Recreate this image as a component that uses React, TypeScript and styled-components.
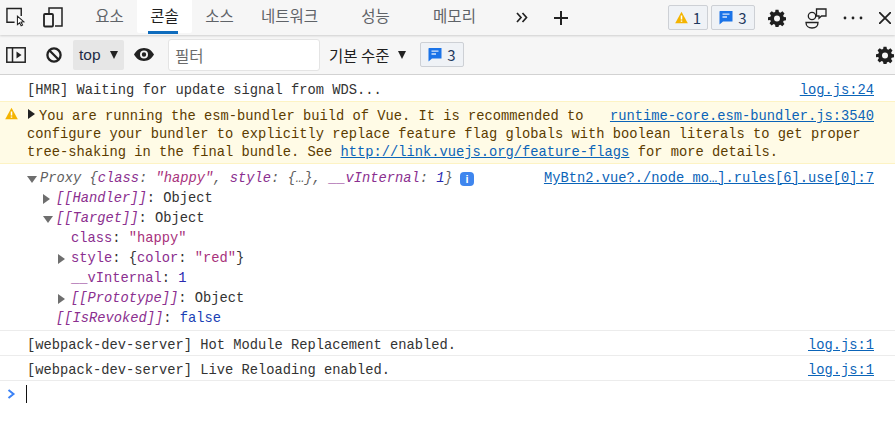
import React from "react";
import styled, { createGlobalStyle } from "styled-components";

const Global = createGlobalStyle`
  html, body { margin: 0; padding: 0; background: #fff; overflow: hidden; }
  body { font-family: "Noto Sans CJK KR", "Noto Sans", sans-serif; }
`;
const CJK = `"Noto Sans CJK KR", "Noto Sans", sans-serif`;
const MONO = `"Liberation Mono", monospace`;

const Page = styled.div`width: 895px; height: 421px; background: #fff; overflow: hidden;`;

const TopBar = styled.div`
  height: 35px; background: #f6f6f6; display: flex; align-items: center;
  box-shadow: 0 1px 2px rgba(0,0,0,.16); position: relative; z-index: 1;
`;
const IconSlot = styled.div<{ $w: number; $ml?: number; $mr?: number }>`
  width: ${p => p.$w}px; margin-left: ${p => p.$ml ?? 0}px; margin-right: ${p => p.$mr ?? 0}px; height: 100%; flex: none;
  display: flex; align-items: center; justify-content: center; color: #1f1f1f;
`;
const Tab = styled.div<{ $w: number; $ml?: number; $active?: boolean }>`
  width: ${p => p.$w}px; margin-left: ${p => p.$ml ?? 0}px; height: 33px; flex: none; display: flex; align-items: center; justify-content: center;
  box-sizing: border-box; padding-bottom: 3px;
  font: 15.5px ${CJK}; color: ${p => (p.$active ? "#1f1f1f" : "#5f6368")};
  background: ${p => (p.$active ? "#fff" : "transparent")};
  border-radius: 0 0 2px 2px; margin-top: -2px; position: relative;
  ${p => p.$active ? `&::after { content: ""; position: absolute; left: 11px; right: 14px; bottom: -1px; height: 3px; background: #0f6cbd; }` : ""}
`;
const Badge = styled.div<{ $w: number; $ml: number }>`
  width: ${p => p.$w}px; height: 25px; margin-left: ${p => p.$ml}px; flex: none; box-sizing: border-box;
  border: 1px solid #cdd0d5; border-radius: 2px; background: #eff2f6;
  display: flex; align-items: center; justify-content: center; gap: 5px;
  font: 15px ${CJK}; color: #1f3a5f;
`;
const FilterBar = styled.div`
  height: 39px; background: #f6f6f6; border-bottom: 1px solid #d2d2d2;
  display: flex; align-items: center; box-sizing: content-box;
`;
const ContextSelect = styled.div`
  width: 51px; height: 30px; margin-left: 11px; flex: none; background: #e6e6e6; border-radius: 2px;
  display: flex; align-items: center; padding-left: 6px; box-sizing: border-box; gap: 9px;
  font: 15.5px "Liberation Sans", sans-serif; color: #1e2b45;
`;
const Caret = styled.span`
  width: 0; height: 0; border-left: 4.5px solid transparent; border-right: 4.5px solid transparent;
  border-top: 8px solid #222; display: block;
`;
const FilterInput = styled.div`
  width: 152px; height: 32px; margin-left: 14px; flex: none; box-sizing: border-box; background: #fff;
  border: 1px solid #e4e4e4; border-radius: 3px; padding-left: 6px; display: flex; align-items: center;
  font: 15.5px ${CJK}; color: #6b6b6b;
`;
const Level = styled.div`
  margin-left: 9px; width: 81px; flex: none; display: flex; align-items: center; gap: 8px;
  font: 15.5px ${CJK}; color: #1f1f1f;
`;
const Spacer = styled.div`flex: 1;`;

const Log = styled.div`font: 13.75px/18px ${MONO}; color: #333;`;
const Row = styled.div<{ $h: number; $border?: boolean }>`
  height: ${p => p.$h}px; box-sizing: border-box; padding: 6px 21px 0 27px;
  display: flex; align-items: center; justify-content: space-between; white-space: pre;
  ${p => p.$border ? "border-bottom: 1px solid #ececec;" : ""}
`;
const Source = styled.a`color: #0b64b8; text-decoration: underline; white-space: pre;`;
const Warn = styled.div`
  height: 63px; box-sizing: border-box; background: #fffbe6; border-top: 1px solid #fdf3c4; border-bottom: 1px solid #fdf3c4;
  padding: 6px 21px 0 27px; color: #5c3c00; white-space: pre; position: relative;
`;
const FloatSource = styled(Source)`float: right;`;
const WarnIcon = styled.span`position: absolute; left: 5px; top: 5px; display: flex;`;
const WarnText = styled.span`margin-left: 12px;`;
const TreeBlock = styled.div`
  height: 167px; box-sizing: border-box; padding: 5px 21px 0 27px; border-bottom: 1px solid #ececec; position: relative;
`;
const TreeLine = styled.div<{ $indent: number }>`
  height: 20px; line-height: 20px; padding-left: ${p => p.$indent}px; white-space: pre; position: relative;
`;
const Arrow = styled.span<{ $open?: boolean }>`
  position: absolute; margin-left: -13px; top: ${p => (p.$open ? 7 : 5)}px; width: 0; height: 0; display: block;
  ${p => p.$open
    ? `border-left: 5.5px solid transparent; border-right: 5.5px solid transparent; border-top: 7px solid #6e6e6e;`
    : `border-top: 5.5px solid transparent; border-bottom: 5.5px solid transparent; border-left: 7px solid #6e6e6e;`}
`;
const WarnArrow = styled.span`
  position: absolute; left: 28px; top: 7px; width: 0; height: 0; display: block;
  border-top: 5.5px solid transparent; border-bottom: 5.5px solid transparent; border-left: 7px solid #222;
`;
const Key = styled.span`color: #8b2f8f;`;
const IKey = styled(Key)`font-style: italic;`;
const Str = styled.span`color: #a8327c;`;
const Num = styled.span<{ $i?: boolean }>`color: #2a2ab0; ${p => p.$i ? "font-style: italic;" : ""}`;
const Bool = styled.span`color: #1a3fb5;`;
const Gray = styled.span`color: #5f5f5f; font-style: italic;`;
const TreeSource = styled(Source)`position: absolute; right: 21px; top: 5px; line-height: 20px;`;
const InfoDot = styled.span`
  position: absolute; left: 460px; top: 8px; width: 14px; height: 14px; border-radius: 4px; background: #3f86ee;
  color: #fff; font: bold 11px/14px "Liberation Sans", sans-serif; text-align: center;
`;
const PromptRow = styled.div`height: 25px; display: flex; align-items: center; position: relative; padding-left: 7px; gap: 10px;`;
const Cursor = styled.span`width: 1px; height: 18px; background: #111; display: block; margin-top: 1px;`;

const Gear = ({ s = 18 }: { s?: number }) => (
  <svg width={s} height={s} viewBox="0 0 24 24" fill="#1f1f1f">
    <path fillRule="evenodd" d="M10 1h4l.6 3.1 1.9.8 2.7-1.8 2.8 2.8-1.8 2.7.8 1.9L24 11v4l-3.1.5-.8 1.9 1.8 2.7-2.8 2.8-2.7-1.8-1.9.8L14 24h-4l-.6-3.1-1.9-.8-2.7 1.8-2.8-2.8 1.8-2.7-.8-1.9L0 15v-4l3.1-.6.8-1.9L2.100 5.800l2.800-2.800 2.700 1.800 1.900-.8zM12 8.500a4 4 0 100 8 4 4 0 000-8z" />
  </svg>
);
const MsgIcon = () => (
  <svg width="14" height="15" viewBox="0 0 14 15">
    <path d="M1 1h12.500v10.500H4L.5 14.500V1.500z" fill="#1a73e8" />
    <path d="M3.500 4.200h7M3.500 7h4.500" stroke="#d6e6fb" strokeWidth="1.300" />
  </svg>
);
const WarnTri = ({ s = 13 }: { s?: number }) => (
  <svg width={s} height={s} viewBox="0 0 13 13">
    <path d="M6.500.8L12.800 12.200H.2z" fill="#f4b400" />
    <path d="M6.500 4.500v4M6.500 9.400v1.400" stroke="#fff" strokeWidth="1.500" />
  </svg>
);

export default function App() {
  return (
    <Page>
      <Global />
      <TopBar>
        <IconSlot $w={20} $ml={6}>
          <svg width="21" height="21" viewBox="0 0 21 21" fill="none" stroke="#222" strokeWidth="1.500">
            <path d="M9 15.500H1V1h15v8" />
            <path d="M12 9l0 9 2.300-2 1.600 3.300 1.500-.8-1.600-3.200 3-.3z" fill="#fff" strokeWidth="1.100" />
          </svg>
        </IconSlot>
        <IconSlot $w={20} $ml={17}>
          <svg width="20" height="21" viewBox="0 0 20 21" fill="none" stroke="#222" strokeWidth="1.500">
            <path d="M6 6V1h13v18h-7" />
            <rect x="1" y="7" width="9" height="12.500" rx="1" strokeWidth="1.800" />
          </svg>
        </IconSlot>
        <Tab $w={55} $ml={19}>요소</Tab>
        <Tab $w={55} $active>콘솔</Tab>
        <Tab $w={55}>소스</Tab>
        <Tab $w={85}>네트워크</Tab>
        <Tab $w={87}>성능</Tab>
        <Tab $w={71}>메모리</Tab>
        <IconSlot $w={20} $ml={22}>
          <svg width="12" height="11" viewBox="0 0 12 11" fill="none" stroke="#222" strokeWidth="1.700"><path d="M1 1l4 4.500L1 10M6.500 1l4 4.500-4 4.500" /></svg>
        </IconSlot>
        <IconSlot $w={14} $ml={22}>
          <svg width="14" height="14" viewBox="0 0 14 14" stroke="#222" strokeWidth="2"><path d="M7 0v14M0 7h14" /></svg>
        </IconSlot>
        <Badge $w={40} $ml={100}><WarnTri />1</Badge>
        <Badge $w={44} $ml={3}><MsgIcon />3</Badge>
        <IconSlot $w={18} $ml={13}><Gear /></IconSlot>
        <IconSlot $w={22} $ml={19}>
          <svg width="22" height="22" viewBox="0 0 22 22" fill="none" stroke="#222" strokeWidth="1.300">
            <circle cx="7" cy="9" r="3.700" />
            <path d="M1 15.500h12c0 3.500-2.500 5.500-6 5.500s-6-2-6-5.500z" />
            <path d="M11.500 2h9.500v7h-4.500l-2.500 2.200V9h-2.500z" fill="#f6f6f6" />
          </svg>
        </IconSlot>
        <IconSlot $w={20} $ml={16}>
          <svg width="20" height="4" viewBox="0 0 20 4" fill="#222"><circle cx="2" cy="2" r="1.400" /><circle cx="10" cy="2" r="1.400" /><circle cx="18" cy="2" r="1.400" /></svg>
        </IconSlot>
        <IconSlot $w={12} $ml={16}>
          <svg width="12" height="12" viewBox="0 0 12 12" stroke="#222" strokeWidth="1.800"><path d="M0 0l12 12M12 0L0 12" /></svg>
        </IconSlot>
      </TopBar>
      <FilterBar>
        <IconSlot $w={20} $ml={6}>
          <svg width="20" height="16" viewBox="0 0 20 16" fill="none" stroke="#222" strokeWidth="1.500">
            <rect x=".8" y=".8" width="18.400" height="14.400" />
            <path d="M6.500 1v14" />
            <path d="M10.500 4.500v7l5-3.500z" fill="#222" stroke="none" />
          </svg>
        </IconSlot>
        <IconSlot $w={16} $ml={20}>
          <svg width="16" height="16" viewBox="0 0 16 16" fill="none" stroke="#222" strokeWidth="2.300">
            <circle cx="8" cy="8" r="6.600" />
            <path d="M3.500 3.500l9 9" />
          </svg>
        </IconSlot>
        <ContextSelect>top<Caret /></ContextSelect>
        <IconSlot $w={20} $ml={10}>
          <svg width="20" height="13" viewBox="0 0 20 13">
            <path fillRule="evenodd" fill="#222" d="M10 0c4.500 0 8 2.800 10 6.500C18 10.200 14.500 13 10 13S2 10.200 0 6.500C2 2.800 5.500 0 10 0zm0 2.500a4 4 0 100 8 4 4 0 000-8zm0 1.800a2.200 2.200 0 110 4.400 2.200 2.200 0 010-4.400z" />
          </svg>
        </IconSlot>
        <FilterInput>필터</FilterInput>
        <Level>기본 수준<Caret /></Level>
        <Badge $w={44} $ml={10}><MsgIcon />3</Badge>
        <Spacer />
        <IconSlot $w={18} $mr={1}><Gear /></IconSlot>
      </FilterBar>
      <Log>
        <Row $h={26}>
          <span>[HMR] Waiting for update signal from WDS...</span>
          <Source>log.js:24</Source>
        </Row>
        <Warn>
          <WarnIcon><WarnTri /></WarnIcon>
          <FloatSource>runtime-core.esm-bundler.js:3540</FloatSource>
          <WarnArrow /><WarnText>You are running the esm-bundler build of Vue. It is recommended to</WarnText>
          {"\n"}configure your bundler to explicitly replace feature flag globals with boolean literals to get proper
          {"\n"}tree-shaking in the final bundle. See <Source>http://link.vuejs.org/feature-flags</Source> for more details.
        </Warn>
        <TreeBlock>
          <TreeLine $indent={13}>
            <Arrow $open /><Gray>Proxy {"{"}<Key>class</Key>: <Str>"happy"</Str>, <Key>style</Key>: {"{…}"}, <Key>__vInternal</Key>: <Num $i>1</Num>{"}"}</Gray>
          </TreeLine>
          <InfoDot>i</InfoDot>
          <TreeSource>MyBtn2.vue?./node_mo…].rules[6].use[0]:7</TreeSource>
          <TreeLine $indent={29}><Arrow /><IKey>[[Handler]]</IKey>: Object</TreeLine>
          <TreeLine $indent={29}><Arrow $open /><IKey>[[Target]]</IKey>: Object</TreeLine>
          <TreeLine $indent={44}><Key>class</Key>: <Str>"happy"</Str></TreeLine>
          <TreeLine $indent={44}><Arrow /><Key>style</Key>: {"{"}<Key>color</Key>: <Str>"red"</Str>{"}"}</TreeLine>
          <TreeLine $indent={44}><Key>__vInternal</Key>: <Num>1</Num></TreeLine>
          <TreeLine $indent={44}><Arrow /><IKey>[[Prototype]]</IKey>: Object</TreeLine>
          <TreeLine $indent={29}><IKey>[[IsRevoked]]</IKey>: <Bool>false</Bool></TreeLine>
        </TreeBlock>
        <Row $h={25} $border>
          <span>[webpack-dev-server] Hot Module Replacement enabled.</span>
          <Source>log.js:1</Source>
        </Row>
        <Row $h={25} $border>
          <span>[webpack-dev-server] Live Reloading enabled.</span>
          <Source>log.js:1</Source>
        </Row>
        <PromptRow>
          <svg width="9" height="10" viewBox="0 0 9 10" fill="none" stroke="#3b82f6" strokeWidth="2"><path d="M1.500 1l5 4-5 4" /></svg>
          <Cursor />
        </PromptRow>
      </Log>
    </Page>
  );
}
